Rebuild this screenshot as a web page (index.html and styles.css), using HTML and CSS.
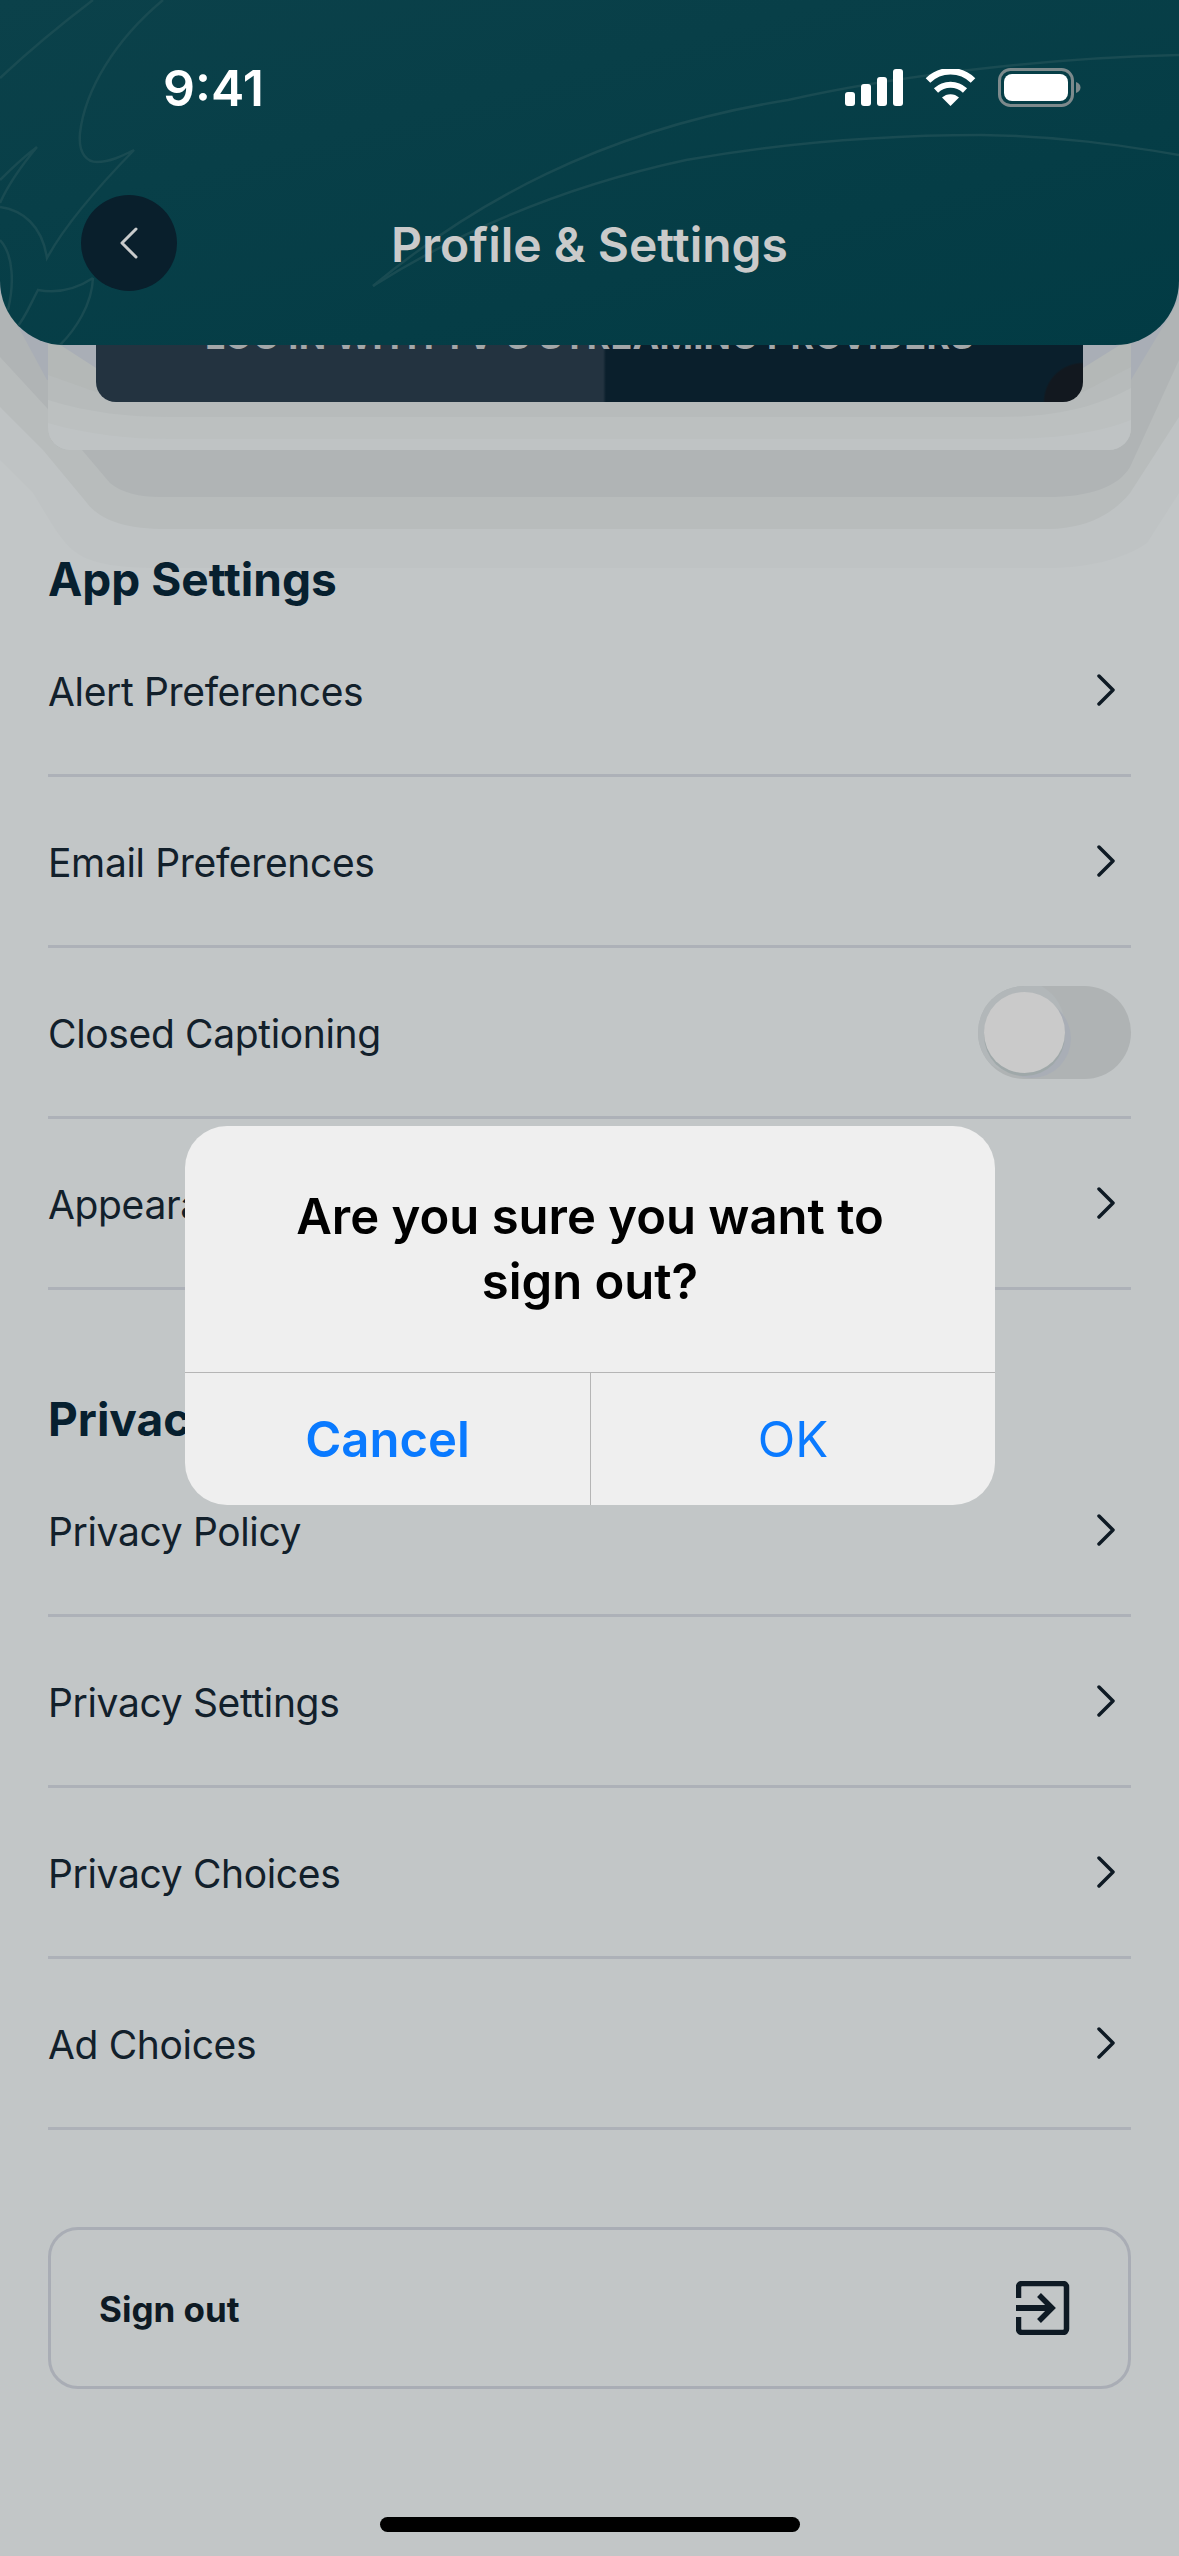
FILE: index.html
```html
<!DOCTYPE html>
<html lang="en">
<head>
  <meta charset="UTF-8">
  <meta name="viewport" content="width=device-width, initial-scale=1.0">
  <title>Profile &amp; Settings</title>
  <link rel="stylesheet" href="styles.css">
</head>
<body>
  <!-- Stepped shadow behind the promo card -->
  <svg class="promo-glow" width="1179" height="400" viewBox="0 200 1179 400">
    <path fill="#bfc3c4" d="M0 200V460L33 493C50 520 62 545 80 555C95 564 120 568 160 568H1047C1090 568 1125 558 1147 543L1179 493V200Z"/>
    <path fill="#b8bcbc" d="M0 200V407L43 450L87 503C100 520 125 529 167 529H1047C1085 529 1112 515 1130 493L1179 417V200Z"/>
    <path fill="#b0b4b5" d="M0 200V357L47 408L82 450L110 483C122 493 140 497 160 497H1047C1090 497 1118 487 1130 467L1179 360V200Z"/>
    <path fill="#a9aeb6" d="M0 200V293L47 380H1131L1179 300V200Z"/>
  </svg>

  <header class="top-bar">
    <svg class="top-bar-art" width="1179" height="345" viewBox="0 0 1179 345" fill="none">
      <path d="M93 0C60 25 30 50 0 78"/>
      <path d="M163 0C115 40 85 90 80 133C78 155 88 162 97 162C110 162 122 156 134 150C95 190 65 225 47 258C42 225 22 210 0 207"/>
      <path d="M37 147C22 158 10 170 0 180M37 147C22 165 8 185 0 203"/>
      <path d="M0 240C14 255 14 285 8 310"/>
      <path d="M93 278C75 290 55 293 38 290C30 305 25 318 17 327M93 278C92 305 75 330 60 345"/>
      <path d="M373 286C470 205 600 130 788 100C890 77 1040 58 1179 55"/>
      <path d="M373 286C430 250 533 193 686 160C800 140 900 135 981 135C1060 136 1120 145 1179 155"/>
    </svg>

    <div class="status-bar">
      <span class="status-time">9:41</span>
      <div class="status-icons">
        <svg class="signal" width="58" height="37" viewBox="0 0 58 37" fill="#fff">
          <rect x="0" y="23" width="10" height="14" rx="3"/>
          <rect x="16" y="15" width="10" height="22" rx="3"/>
          <rect x="32" y="8" width="10" height="29" rx="3"/>
          <rect x="48" y="0" width="10" height="37" rx="3"/>
        </svg>
        <svg class="wifi" width="51" height="37" viewBox="0 0 51 37" fill="none" stroke="#fff">
          <path stroke-width="6.5" d="M3 11.5A32 32 0 0 1 48 11.5"/>
          <path stroke-width="6" d="M11 21.5A21 21 0 0 1 40 21.5"/>
          <path fill="#fff" stroke="none" d="M17 28.5A12.500 12.500 0 0 1 34 28.500L25.500 37Z"/>
        </svg>
        <svg class="battery" width="83" height="39" viewBox="0 0 83 39">
          <rect x="1.500" y="1.500" width="73" height="36" rx="11" fill="none" stroke="#7d8a8c" stroke-width="3"/>
          <rect x="6" y="6" width="64" height="27" rx="8" fill="#fff"/>
          <path fill="#7d8a8c" d="M78 14C81 15 82.500 17 82.500 19.500C82.500 22 81 24 78 25Z"/>
        </svg>
      </div>
    </div>

    <div class="nav-row">
      <button class="back-btn" type="button">
        <svg width="18" height="32" viewBox="0 0 18 32" fill="none" stroke="#c9cbcc" stroke-width="3" stroke-linecap="round" stroke-linejoin="round"><path d="M16 2L2 16L16 30"/></svg>
      </button>
      <h1 class="page-title">Profile &amp; Settings</h1>
    </div>
  </header>

  <main class="content">
    <div class="promo-card">
      <!-- Bands of the inner card's shadow -->
      <svg class="promo-bands" width="1083" height="250" viewBox="48 200 1083 250">
        <rect x="48" y="200" width="1083" height="250" fill="#a9aeb6"/>
        <path fill="#b4b8b7" d="M48 337L96 368H1083L1131 338V450H48Z"/>
        <path fill="#b7bbbb" d="M48 375L96 392H1083L1131 367V450H48Z"/>
        <path fill="#bcc0c0" d="M48 400C90 413 130 417 170 417H1000C1060 417 1100 405 1131 388V450H48Z"/>
        <path fill="#bfc3c4" d="M48 423C90 435 130 439 170 439H1000C1060 439 1100 432 1131 420V450H48Z"/>
      </svg>
      <div class="promo-banner">
        <span class="promo-text">LOG IN WITH TV'S STREAMING PROVIDERS</span>
      </div>
    </div>

    <section>
      <h2 class="section-title">App Settings</h2>
      <ul class="settings-list">
        <li class="settings-row"><span class="row-label">Alert Preferences</span>
          <svg class="chevron" width="20" height="32" viewBox="0 0 20 32"><path d="M3 2L17 16L3 30"/></svg></li>
        <li class="settings-row"><span class="row-label">Email Preferences</span>
          <svg class="chevron" width="20" height="32" viewBox="0 0 20 32"><path d="M3 2L17 16L3 30"/></svg></li>
        <li class="settings-row"><span class="row-label">Closed Captioning</span>
          <div class="toggle"><div class="toggle-knob"></div></div></li>
        <li class="settings-row"><span class="row-label">Appearance</span>
          <svg class="chevron" width="20" height="32" viewBox="0 0 20 32"><path d="M3 2L17 16L3 30"/></svg></li>
      </ul>
    </section>

    <section>
      <h2 class="section-title">Privacy</h2>
      <ul class="settings-list">
        <li class="settings-row"><span class="row-label">Privacy Policy</span>
          <svg class="chevron" width="20" height="32" viewBox="0 0 20 32"><path d="M3 2L17 16L3 30"/></svg></li>
        <li class="settings-row"><span class="row-label">Privacy Settings</span>
          <svg class="chevron" width="20" height="32" viewBox="0 0 20 32"><path d="M3 2L17 16L3 30"/></svg></li>
        <li class="settings-row"><span class="row-label">Privacy Choices</span>
          <svg class="chevron" width="20" height="32" viewBox="0 0 20 32"><path d="M3 2L17 16L3 30"/></svg></li>
        <li class="settings-row"><span class="row-label">Ad Choices</span>
          <svg class="chevron" width="20" height="32" viewBox="0 0 20 32"><path d="M3 2L17 16L3 30"/></svg></li>
      </ul>
    </section>

    <button class="sign-out" type="button">
      <span class="sign-out-label">Sign out</span>
      <svg width="54" height="54" viewBox="0 0 54 54" fill="none" stroke="#0e1a24" stroke-width="5.500">
        <path d="M2.500 17V6A3.500 3.500 0 0 1 6 2.500H47A3.500 3.500 0 0 1 50.500 6V48A3.500 3.500 0 0 1 47 51.500H6A3.500 3.500 0 0 1 2.500 48V36"/>
        <path stroke-width="6" d="M0 27H36"/>
        <path d="M23 14L36 27L23 40"/>
      </svg>
    </button>
  </main>

  <!-- Sign out confirmation -->
  <div class="dialog">
    <p class="dialog-title">Are you sure you want to sign out?</p>
    <div class="dialog-actions">
      <button class="dialog-btn dialog-btn-cancel" type="button">Cancel</button>
      <button class="dialog-btn" type="button">OK</button>
    </div>
  </div>

  <div class="home-bar"></div>
</body>
</html>
```

FILE: styles.css
```css
* {
  box-sizing: border-box;
}
body {
  position: relative;
  width: 1179px;
  height: 2556px;
  margin: 0;
  overflow: hidden;
  background-color: #c2c6c7;
  font-family: Inter, "Noto Sans", sans-serif;
  color: #12202b;
}
button {
  font-family: inherit;
  background: none;
  border: none;
  padding: 0;
}

/* Header */
.top-bar {
  position: relative;
  z-index: 2;
  height: 345px;
  padding-top: 68px;
  overflow: hidden;
  border-radius: 0 0 64px 64px;
  background: linear-gradient(165deg, #0b414a, #023b44);
}
.top-bar-art {
  position: absolute;
  top: 0;
  left: 0;
}
.top-bar-art path {
  stroke: #194b52;
  stroke-width: 2.5;
}
.status-bar {
  position: relative;
  display: flex;
  justify-content: space-between;
  align-items: center;
  height: 39px;
  padding: 0 98px 0 163px;
}
.status-time {
  font-size: 50px;
  font-weight: 600;
  color: #fff;
}
.status-icons {
  display: flex;
  align-items: center;
  gap: 22px;
}
.nav-row {
  position: relative;
  display: grid;
  grid-template-columns: 96px 1fr 96px;
  align-items: center;
  margin-top: 88px;
  padding: 0 81px;
}
.back-btn {
  display: flex;
  justify-content: center;
  align-items: center;
  width: 96px;
  height: 96px;
  border-radius: 50%;
  background-color: #091f2c;
}
.page-title {
  margin: 3px 0 0;
  font-size: 48px;
  font-weight: 600;
  text-align: center;
  color: #cacaca;
}

/* Promo card */
.promo-glow {
  position: absolute;
  top: 200px;
  left: 0;
}
.content {
  position: relative;
  z-index: 1;
  padding: 0 48px;
}
.promo-card {
  position: relative;
  height: 250px;
  margin-top: -145px;
  padding: 0 48px;
  overflow: hidden;
  border-radius: 0 0 22px 22px;
}
.promo-bands {
  position: absolute;
  top: 0;
  left: 0;
}
.promo-banner {
  position: relative;
  display: flex;
  justify-content: center;
  align-items: flex-end;
  height: 202px;
  padding-bottom: 48px;
  border-radius: 0 0 20px 20px;
  background:
    radial-gradient(circle at 100% 100%, #12181f 38px, transparent 40px),
    linear-gradient(90deg, #233340 507px, #0a1f2c 510px);
}
.promo-text {
  font-size: 36px;
  font-weight: 700;
  letter-spacing: 0.17px;
  line-height: 1;
  white-space: nowrap;
  color: #a3a7a9;
}

/* Settings lists */
.section-title {
  height: 54px;
  margin: 102px 0 0;
  font-size: 46px;
  font-weight: 700;
  line-height: 54px;
  color: #07202f;
}
.settings-list {
  margin: 0;
  padding: 0;
  list-style: none;
}
.settings-row {
  display: flex;
  justify-content: space-between;
  align-items: center;
  height: 171px;
  border-bottom: 3px solid #adb1b8;
}
.row-label {
  margin-top: 3px;
  font-size: 39px;
  letter-spacing: -0.35px;
}
.chevron {
  margin-right: 15px;
  fill: none;
  stroke: #0e1a24;
  stroke-width: 3.5;
  stroke-linecap: round;
  stroke-linejoin: round;
}
.toggle {
  width: 153px;
  height: 93px;
  padding: 6px;
  overflow: hidden;
  border-radius: 47px;
  background-color: #afb3b4;
}
.toggle-knob {
  width: 81px;
  height: 81px;
  border-radius: 50%;
  background-color: #cacaca;
  box-shadow: 0 3px 0 #9fa8a9, 7px 6px 0 -1px #a9aeb6, -6px -6px 0 6px #b2b7b9;
}

/* Sign out */
.sign-out {
  display: flex;
  justify-content: space-between;
  align-items: center;
  width: 100%;
  height: 162px;
  margin-top: 97px;
  padding: 0 58px 0 48px;
  border: 3px solid #a9adb5;
  border-radius: 30px;
  font-size: 35px;
  font-weight: 700;
  color: #0e1a24;
}
.sign-out-label {
  margin-top: 2px;
}

/* Alert */
.dialog {
  position: absolute;
  z-index: 3;
  top: 1126px;
  left: 185px;
  width: 810px;
  height: 379px;
  overflow: hidden;
  border-radius: 42px;
  background-color: #efefef;
}
.dialog-title {
  height: 246px;
  margin: 0;
  padding: 58px 90px 0;
  font-size: 49px;
  font-weight: 600;
  line-height: 65px;
  text-align: center;
  color: #000;
}
.dialog-actions {
  display: grid;
  grid-template-columns: 406px 404px;
  height: 133px;
  border-top: 1px solid #b5b5b5;
}
.dialog-btn {
  font-size: 49px;
  color: #0a7aff;
}
.dialog-btn-cancel {
  font-weight: 600;
  border-right: 1px solid #b5b5b5;
}

.home-bar {
  position: absolute;
  z-index: 3;
  bottom: 24px;
  left: 380px;
  width: 420px;
  height: 15px;
  border-radius: 8px;
  background-color: #000;
}
```
